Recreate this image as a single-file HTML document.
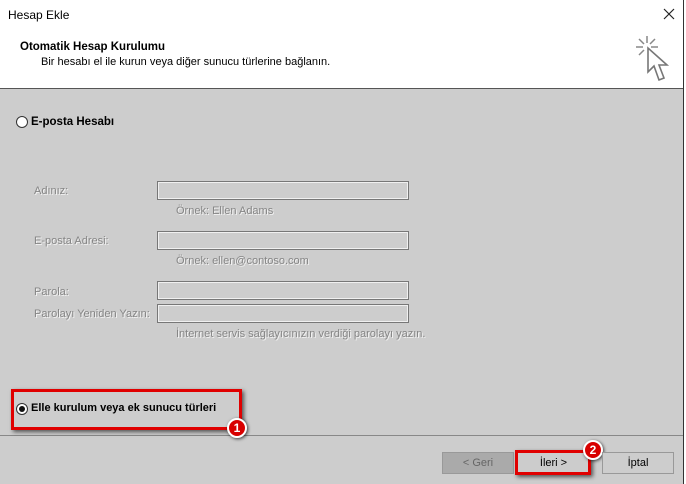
<!DOCTYPE html>
<html><head><meta charset="utf-8"><style>
*{margin:0;padding:0;box-sizing:border-box}
body{width:686px;height:484px;overflow:hidden;background:#fff;font-family:"Liberation Sans",sans-serif;position:relative;font-size:11px}
.a{position:absolute}
.gray{background:#cdcdcd}
.lbl{color:#858585;text-shadow:1px 1px 0 #f2f2f2;font-size:11px}
.inp{position:absolute;left:157px;width:252px;height:19px;border:1px solid #777;background:#cdcdcd;box-shadow:inset 0 0 0 1px #f0f0f0}
.btn{position:absolute;top:452px;height:22px;border:1px solid #999;text-align:center;line-height:20px;font-size:11px}
.red{position:absolute;border:3px solid #e00000;box-shadow:2px 2px 4px rgba(0,0,0,.6)}
.num{position:absolute;width:20px;height:20px;border-radius:50%;background:#d80000;border:2px solid #fff;box-shadow:1px 1px 3px rgba(0,0,0,.7);color:#fff;font-weight:bold;font-size:12px;text-align:center;line-height:16px}
.radio{position:absolute;width:12px;height:12px;border-radius:50%;border:1px solid #333;background:#fff}
</style></head><body>
<div class="a" style="left:8px;top:8px;font-size:12px">Hesap Ekle</div>
<svg class="a" style="left:663px;top:8px" width="12" height="12"><path d="M1 1L11 11M11 1L1 11" stroke="#222" stroke-width="1.2"/></svg>
<div class="a" style="left:20px;top:41px;font-weight:bold;font-size:11.5px">Otomatik Hesap Kurulumu</div>
<div class="a" style="left:41px;top:56px;font-size:11px">Bir hesabı el ile kurun veya diğer sunucu türlerine bağlanın.</div>
<svg class="a" style="left:634px;top:34px" width="40" height="52" viewBox="0 0 40 52">
<g stroke="#888" stroke-width="1.5"><line x1="13" y1="2" x2="13" y2="9"/><line x1="2" y1="13" x2="9" y2="13"/><line x1="17" y1="13" x2="24" y2="13"/><line x1="5" y1="5" x2="10" y2="10"/><line x1="21" y1="5" x2="16" y2="10"/><line x1="5" y1="21" x2="10" y2="16"/></g>
<path d="M14 14 L14 38 L20 32 L25 46 L30 44 L25 31 L33 31 Z" fill="#fff" stroke="#777" stroke-width="1.6"/>
</svg>
<div class="a gray" style="left:0;top:88px;width:683px;height:396px;border-top:1px solid #555"></div>
<div class="a" style="left:683px;top:0;width:3px;height:484px;background:#fff;border-left:1px solid #333"></div>
<div class="a" style="left:0;top:435px;width:683px;height:1px;background:#fff;border-top:1px solid #888"></div>
<div class="radio" style="left:16px;top:116px"></div>
<div class="a" style="left:31px;top:116px;font-weight:bold;font-size:11.5px">E-posta Hesabı</div>
<div class="a lbl" style="left:34px;top:185px">Adınız:</div>
<div class="inp" style="top:181px"></div>
<div class="a lbl" style="left:176px;top:205px">Örnek: Ellen Adams</div>
<div class="a lbl" style="left:34px;top:235px">E-posta Adresi:</div>
<div class="inp" style="top:231px"></div>
<div class="a lbl" style="left:176px;top:255px">Örnek: ellen@contoso.com</div>
<div class="a lbl" style="left:34px;top:286px">Parola:</div>
<div class="inp" style="top:281px"></div>
<div class="a lbl" style="left:34px;top:308px">Parolayı Yeniden Yazın:</div>
<div class="inp" style="top:304px"></div>
<div class="a lbl" style="left:176px;top:328px">İnternet servis sağlayıcınızın verdiği parolayı yazın.</div>
<div class="radio" style="left:16px;top:403px"><div style="position:absolute;left:2px;top:2px;width:6px;height:6px;border-radius:50%;background:#111"></div></div>
<div class="a" style="left:31px;top:402px;font-weight:bold;font-size:11px">Elle kurulum veya ek sunucu türleri</div>
<div class="red" style="left:11px;top:389px;width:231px;height:41px"></div>
<div class="num" style="left:227px;top:418px">1</div>
<div class="btn" style="left:442px;background:#aaa;color:#666;width:72px">&lt; Geri</div>
<div class="btn" style="left:516px;background:#ccc;width:75px">İleri &gt;</div>
<div class="red" style="left:515px;top:450px;width:76px;height:25px"></div>
<div class="num" style="left:583px;top:440px">2</div>
<div class="btn" style="left:602px;background:#cdcdcd;width:72px">İptal</div>
</body></html>
